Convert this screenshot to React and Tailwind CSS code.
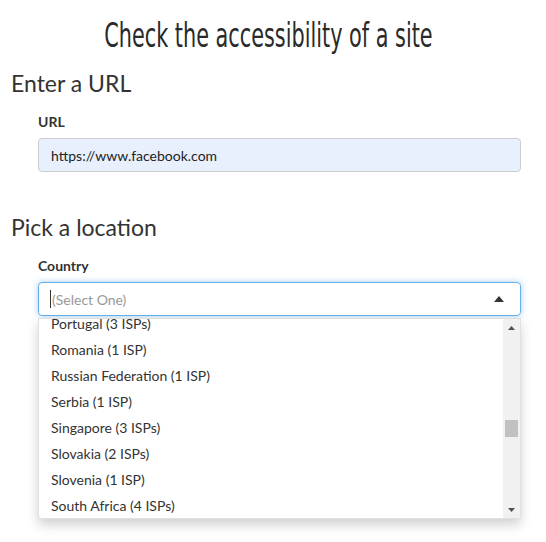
import React from 'react';

const countries = [
    'Portugal (3 ISPs)',
    'Romania (1 ISP)',
    'Russian Federation (1 ISP)',
    'Serbia (1 ISP)',
    'Singapore (3 ISPs)',
    'Slovakia (2 ISPs)',
    'Slovenia (1 ISP)',
    'South Africa (4 ISPs)',
];

const App = () => {
    return (
        <div className="w-[546px] h-[542px] bg-white text-[#333] px-[11px] font-['Lato','Liberation_Sans',sans-serif] overflow-hidden">
            <h1 className="mt-[13px] h-[44px] pr-[10px] flex justify-center items-center text-[#2a2a2a] font-['DejaVu_Sans',sans-serif] font-stretch-condensed">
                <span className="inline-block whitespace-nowrap text-[34px] leading-[44px] scale-x-[0.68]">
                    Check the accessibility of a site
                </span>
            </h1>

            <h2 className="mt-[11px] text-[23px] leading-[30px]">Enter a URL</h2>
            <div className="ml-[27px] mr-[14px]">
                <label className="block mt-[14px] text-[14px] leading-[20px] font-bold">URL</label>
                <div className="mt-[6px] h-[34px] flex items-center px-[12px] bg-[#e8f0fe] border border-[#ccc] rounded-[4px] text-[14px] text-[#222]">
                    https://www.facebook.com
                </div>
            </div>

            <h2 className="mt-[40px] text-[23px] leading-[30px]">Pick a location</h2>
            <div className="ml-[27px] mr-[14px]">
                <label className="block mt-[14px] text-[14px] leading-[20px] font-bold">Country</label>
                <div className="mt-[6px] h-[34px] flex items-center pl-[11px] pr-[16px] border border-[#66afe9] rounded-[4px] shadow-[0_0_6px_rgba(102,175,233,0.6)] text-[14px]">
                    <span className="w-px h-[18px] bg-[#333] mr-px" />
                    <span className="flex-1 text-[#999]">(Select One)</span>
                    <svg width="10" height="6" viewBox="0 0 10 6"><path d="M0 6 L5 0 L10 6 Z" fill="#333" /></svg>
                </div>

                {/* dropdown list */}
                <div className="mt-[2px] h-[201px] flex border border-[rgba(0,0,0,0.12)] rounded-b-[3px] shadow-[0_6px_12px_rgba(0,0,0,0.18)] bg-white overflow-hidden">
                    <div className="flex-1 overflow-hidden">
                        <ul className="-mt-[9px]">
                            {countries.map((c) => (
                                <li key={c} className="h-[26px] flex items-center pl-[12px] text-[14px] text-[#333]">
                                    {c}
                                </li>
                            ))}
                        </ul>
                    </div>
                    <div className="w-[17px] bg-[#f1f1f1] flex flex-col items-center">
                        <div className="h-[17px] flex items-center justify-center">
                            <svg width="7" height="4" viewBox="0 0 7 4"><path d="M0 4 L3.5 0 L7 4 Z" fill="#505050" /></svg>
                        </div>
                        <div className="flex-1 w-full px-[2px] pt-[84px]">
                            <div className="h-[17px] bg-[#c1c1c1]" />
                        </div>
                        <div className="h-[17px] flex items-center justify-center">
                            <svg width="7" height="4" viewBox="0 0 7 4"><path d="M0 0 L3.5 4 L7 0 Z" fill="#505050" /></svg>
                        </div>
                    </div>
                </div>
            </div>
        </div>
    );
};

export default App;
